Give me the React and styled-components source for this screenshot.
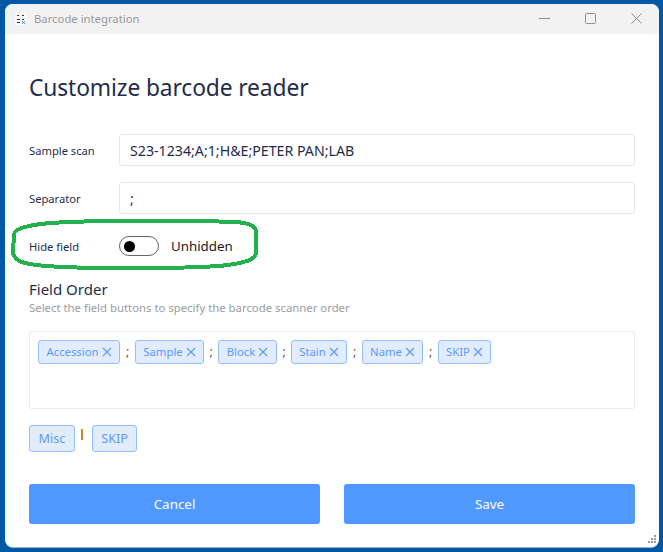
import React from "react";
import styled, { createGlobalStyle } from "styled-components";

const Global = createGlobalStyle`
  html, body { margin: 0; padding: 0; height: 100%; background: #0058a6; overflow: hidden; }
  #root { height: 552px; }
`;

const Desktop = styled.div`
  position: relative;
  box-sizing: border-box;
  width: 663px;
  height: 552px;
  padding: 4px 4px 5px 5px;
  background: #0058a6;
  font-family: "Noto Sans", "Open Sans", sans-serif;
`;

const Win = styled.div`
  position: relative;
  height: 100%;
  display: flex;
  flex-direction: column;
  background: #fff;
  border-radius: 8px;
  overflow: hidden;
  box-shadow: 0 1px 0 #9fb4c6;
`;

const TitleBar = styled.div`
  flex: none;
  height: 30px;
  display: flex;
  align-items: center;
  background: #f2f2f2;
  padding-left: 10px;
`;

const AppIcon = styled.svg`
  width: 12px;
  height: 12px;
  margin-right: 7px;
`;

const TitleText = styled.span`
  flex: 1;
  font-size: 11.3px;
  color: #999;
  padding-bottom: 1px;
`;

const WinButton = styled.div`
  box-sizing: border-box;
  width: 46px;
  height: 30px;
  padding-bottom: 2px;
  display: flex;
  align-items: center;
  justify-content: center;
  color: #8f8f8f;
`;

const Content = styled.div`
  flex: 1;
  display: flex;
  flex-direction: column;
  padding: 0 24px;
`;

const Heading = styled.h1`
  margin: 37px 0 29px;
  font-size: 22.8px;
  line-height: 34px;
  font-weight: 400;
  letter-spacing: -0.12px;
  color: #1f2d4d;
`;

const FormRow = styled.div`
  display: flex;
  align-items: center;
  height: 32px;
  margin-bottom: 16px;
`;

const Label = styled.label`
  width: 90px;
  flex: none;
  font-size: 11.2px;
  color: #1f2d4d;
`;

const TextInput = styled.div`
  flex: 1;
  box-sizing: border-box;
  height: 32px;
  display: flex;
  align-items: center;
  padding: 0 10px;
  border: 1px solid #e4e7ec;
  border-radius: 3px;
  font-size: 14.2px;
  color: #1f2d4d;
`;

const SwitchRow = styled.div`
  display: flex;
  align-items: center;
  height: 20px;
  margin: 6px 0 22px;
`;

const Switch = styled.div`
  box-sizing: border-box;
  width: 40px;
  height: 20px;
  display: flex;
  align-items: center;
  padding-left: 4px;
  border: 1px solid #666;
  border-radius: 10px;
  background: #fff;
`;

const Knob = styled.span`
  width: 11px;
  height: 11px;
  border-radius: 50%;
  background: #000;
`;

const SwitchText = styled.span`
  margin-left: 12px;
  font-size: 13.3px;
  color: #1a1a1a;
`;

const SubHeading = styled.h2`
  margin: 0;
  font-size: 15px;
  line-height: 22px;
  font-weight: 400;
  color: #1f2d4d;
`;

const Hint = styled.p`
  margin: 0 0 16px;
  font-size: 11.35px;
  line-height: 15px;
  color: #9a9da3;
`;

const OrderBox = styled.div`
  box-sizing: border-box;
  height: 78px;
  padding: 8px;
  display: flex;
  align-items: flex-start;
  border: 1px solid #e8eaed;
  border-radius: 3px;
`;

const Tag = styled.div`
  box-sizing: border-box;
  width: ${(p) => p.$width}px;
  height: 24px;
  padding-bottom: 2px;
  display: flex;
  align-items: center;
  justify-content: center;
  gap: 3px;
  background: #e1edff;
  border: 1px solid #94bdfb;
  border-radius: 3px;
  font-size: 11.3px;
  color: #5c99fb;

  svg {
    margin-top: 2px;
  }
`;

const Sep = styled.span`
  width: ${(p) => p.$width}px;
  flex: none;
  text-align: center;
  font-size: 12px;
  line-height: 24px;
  color: #555;
`;

const Palette = styled.div`
  display: flex;
  align-items: flex-start;
  margin: 16px 0 32px;
`;

const PaletteButton = styled.div`
  box-sizing: border-box;
  height: 27px;
  display: flex;
  align-items: center;
  padding: 0 8.5px;
  background: #e1edff;
  border: 1px solid #94bdfb;
  border-radius: 3px;
  font-size: 12.6px;
  color: #5c99fb;
`;

const Cursor = styled.span`
  width: 2px;
  height: 11px;
  margin: 4px 9px 0 6px;
  background: #c98a1e;
`;

const Actions = styled.div`
  display: flex;
  justify-content: space-between;
`;

const ActionButton = styled.div`
  width: 291px;
  height: 40px;
  display: flex;
  align-items: center;
  justify-content: center;
  background: #4f98ff;
  border-radius: 3px;
  font-size: 13.4px;
  color: #fff;
`;

const Annotation = styled.svg`
  position: absolute;
  left: 0;
  top: 0;
  pointer-events: none;
`;

const Grip = styled.svg`
  position: absolute;
  right: 3px;
  bottom: 2px;
`;

const fields = [
  { name: "Accession", width: 82, gap: 0 },
  { name: "Sample", width: 69, gap: 15 },
  { name: "Block", width: 59, gap: 14 },
  { name: "Stain", width: 56, gap: 14 },
  { name: "Name", width: 61, gap: 15 },
  { name: "SKIP", width: 53, gap: 15 },
];

const Cross = () => (
  <svg width="10" height="10" viewBox="0 0 10 10" fill="none" stroke="currentColor" strokeWidth="1.1">
    <path d="M1 1l8 8M9 1l-8 8" />
  </svg>
);

export default function App() {
  return (
    <Desktop>
      <Global />
      <Win>
        <TitleBar>
          <AppIcon viewBox="0 0 12 12">
            <rect width="12" height="12" fill="#fafafa" />
            <path d="M2 2h2v1H2zM7 2h2v1H7zM2 6h3v1H2zM2 9h3v1H2zM7 6h2v1H7z" fill="#333" />
            <path d="M7 8l3 3M10 8l-3 3" stroke="#2a9fe0" strokeWidth="1" />
          </AppIcon>
          <TitleText>Barcode integration</TitleText>
          <WinButton>
            <svg width="11" height="11" viewBox="0 0 11 11" stroke="currentColor" fill="none"><path d="M0 5.5h11" /></svg>
          </WinButton>
          <WinButton>
            <svg width="11" height="11" viewBox="0 0 11 11" stroke="currentColor" fill="none"><rect x=".5" y=".5" width="10" height="10" rx="1" /></svg>
          </WinButton>
          <WinButton>
            <svg width="11" height="11" viewBox="0 0 11 11" stroke="currentColor" fill="none"><path d="M.5.5l10 10M10.5.5l-10 10" /></svg>
          </WinButton>
        </TitleBar>
        <Content>
          <Heading>Customize barcode reader</Heading>
          <FormRow>
            <Label>Sample scan</Label>
            <TextInput>S23-1234;A;1;H&amp;E;PETER PAN;LAB</TextInput>
          </FormRow>
          <FormRow>
            <Label>Separator</Label>
            <TextInput>;</TextInput>
          </FormRow>
          <SwitchRow>
            <Label>Hide field</Label>
            <Switch><Knob /></Switch>
            <SwitchText>Unhidden</SwitchText>
          </SwitchRow>
          <SubHeading>Field Order</SubHeading>
          <Hint>Select the field buttons to specify the barcode scanner order</Hint>
          <OrderBox>
            {fields.map(({ name, width, gap }) => (
              <React.Fragment key={name}>
                {gap > 0 && <Sep $width={gap}>;</Sep>}
                <Tag $width={width}>{name}<Cross /></Tag>
              </React.Fragment>
            ))}
          </OrderBox>
          <Palette>
            <PaletteButton>Misc</PaletteButton>
            <Cursor />
            <PaletteButton>SKIP</PaletteButton>
          </Palette>
          <Actions>
            <ActionButton>Cancel</ActionButton>
            <ActionButton>Save</ActionButton>
          </Actions>
        </Content>
        <Grip width="10" height="10" viewBox="0 0 10 10" fill="#9a9a9a">
          <path d="M8 0h2v2H8zM8 3h2v2H8zM8 6h2v2H8zM5 3h2v2H5zM5 6h2v2H5zM2 6h2v2H2z" />
        </Grip>
      </Win>
      <Annotation width="663" height="552" viewBox="0 0 663 552" fill="none" shapeRendering="crispEdges">
        <path
          d="M14 234 C15 228 30 225 50 223 C100 220 180 220 235 222 C250 223 256 226 256 232 L256 252 C256 260 245 263 220 266 C170 269 90 269 45 266 C25 264 14 262 13 252 Z"
          stroke="#22b14c"
          strokeWidth="4"
        />
      </Annotation>
    </Desktop>
  );
}
